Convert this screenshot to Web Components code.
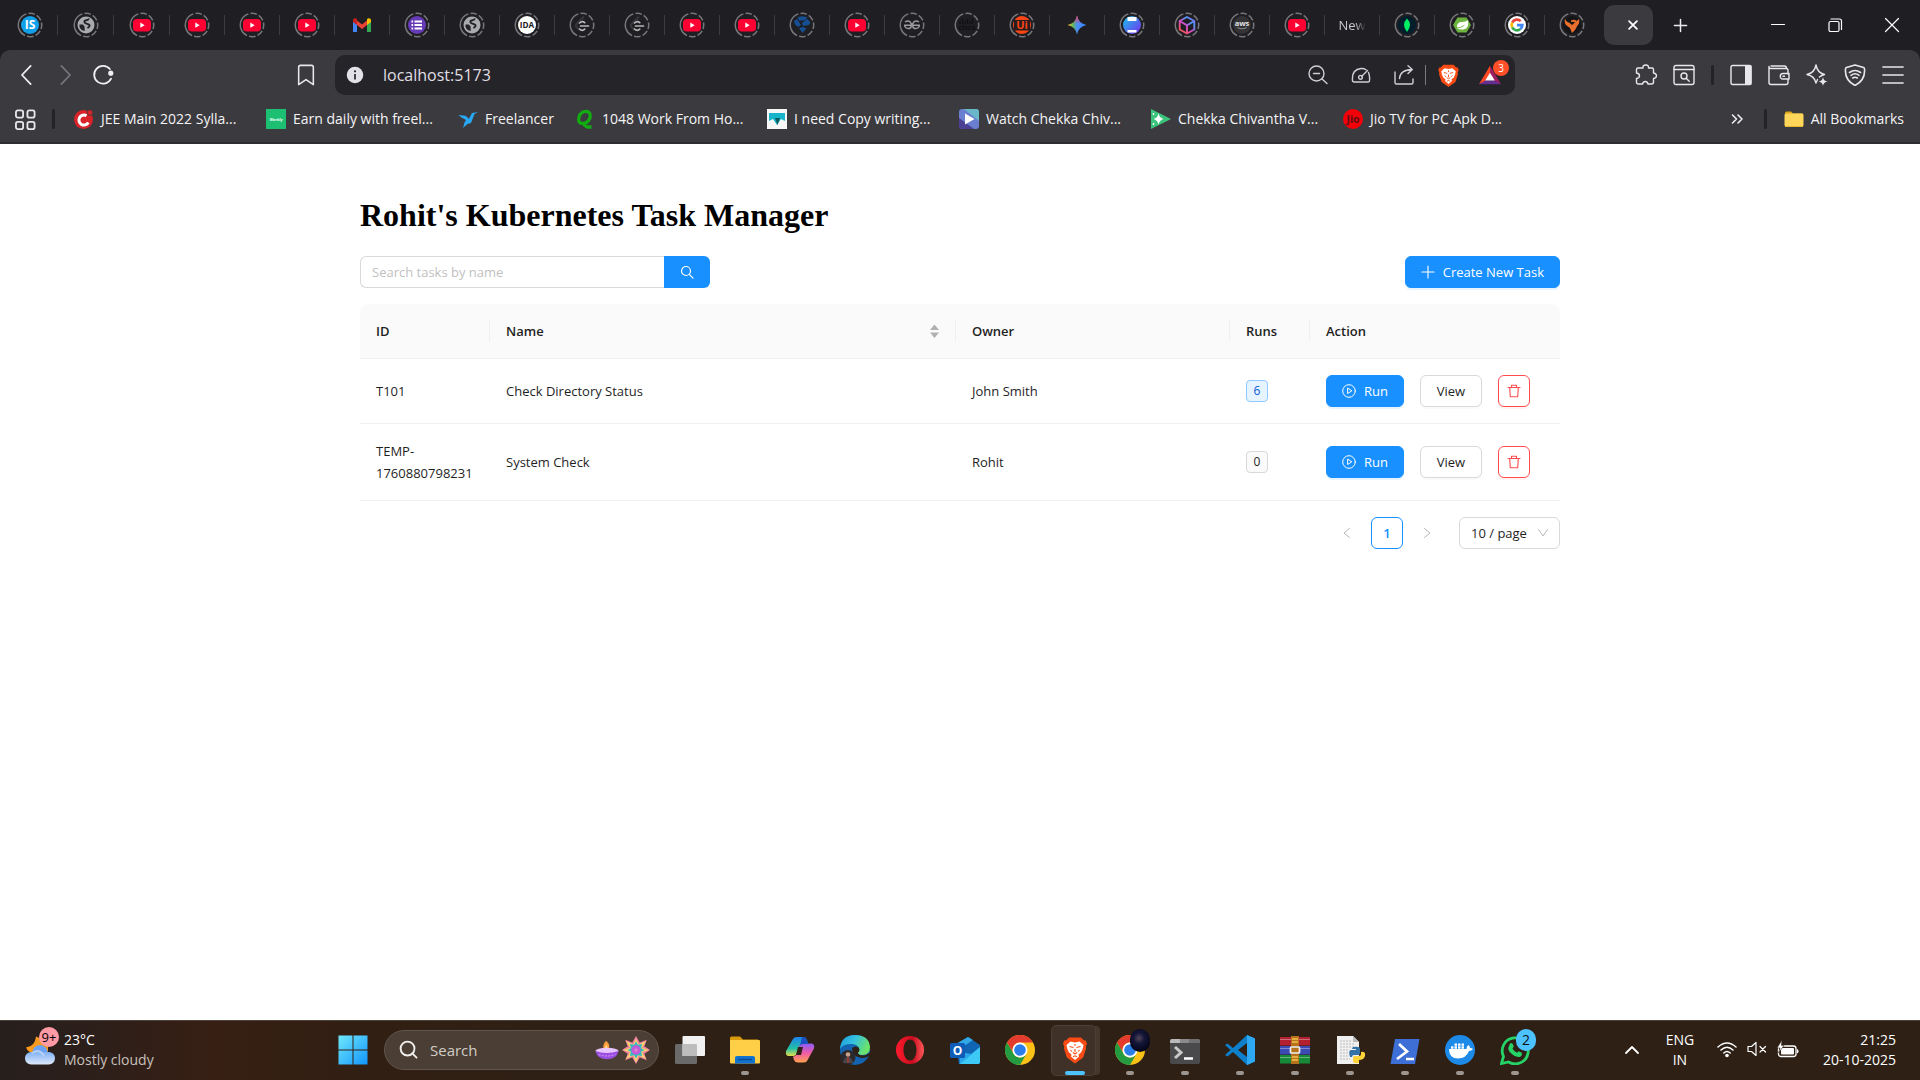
<!DOCTYPE html>
<html lang="en">
<head>
<meta charset="utf-8">
<title>Rohit's Kubernetes Task Manager</title>
<style>
  html, body { margin: 0; height: 100%; }
  body { font-family: "Open Sans", "Noto Sans", sans-serif; font-size: 14px; background: #fff; }
</style>
</head>
<body>
<desk-top></desk-top>
<script>
const RING = '<circle cx="13" cy="13" r="11.7" fill="none" stroke="#77777b" stroke-width="1.5" pathLength="100" stroke-dasharray="38 3 8.8 3 8.8 3 8.8 3 8.8 3 8.8 3" transform="rotate(115 13 13)"/>';
const fav = inner => ['0 0 26 26', RING + inner];
const line = (inner, c = '#e8e8ec', w = 1.4) => `<g fill="none" stroke="${c}" stroke-width="${w}" stroke-linecap="round" stroke-linejoin="round">${inner}</g>`;
const T = (x, y, size, fill, text, extra = '') => `<text x="${x}" y="${y}" font-size="${size}" fill="${fill}" text-anchor="middle" font-family="Open Sans, sans-serif" font-weight="700" ${extra}>${text}</text>`;
const LION = '<path fill="#fb4b14" d="M6 1h12l3 3 1.5-.3L24 7l-1.200 3 .3 2-3 9-8.100 6-8.100-6-3-9 .3-2L0 7l1.500-3.300L3 4z"/><path fill="#fff" d="M7.500 5l4.500 1 4.500-1L20.500 8.500l-.8 4-1.700 3.500-2.500 2 .5 2-4 3.500L8 20l.5-2L6 16l-1.700-3.500-.8-4z"/><path d="M6.500 10l4 1M17.500 10l-4 1M12 7.500v2M12 12.500v3M9.800 16L12 17.300l2.200-1.300M7.500 13.500l1.300 1.500M16.500 13.500l-1.300 1.500M10 20.300l2-1 2 1" stroke="#fb4b14" stroke-width="1.100" fill="none"/>';
const CHROME = '<circle cx="15" cy="15" r="15" fill="#fbc116"/><path fill="#e33b2e" d="M2 7.500A15 15 0 0 1 28 7.500H15a7.500 7.500 0 0 0-6.500 11.200z"/><path fill="#249a41" d="M2 7.500A15 15 0 0 0 15 30l6.500-11.300a7.500 7.500 0 0 1-13 0z"/><circle cx="15" cy="15" r="7.500" fill="#fff"/><circle cx="15" cy="15" r="5.800" fill="#2b7de9"/>';
const LEET = '<path d="M15 4.500L7.500 12q-1.500 1.500 0 3l3 3" stroke="#37363a" stroke-width="2.200" fill="none"/><path d="M10.500 11q2.700-2.500 5.200-.4M10.500 17q2.700 2.500 5.200.2M11.500 14H19.500" stroke="#b9b9b9" stroke-width="1.700" fill="none" stroke-linecap="round"/>';
const GLOBE = '<circle cx="13" cy="13" r="8.500" fill="#a9abaf"/><path d="M6.500 12.500h3.300l1.700 2 .3 4.500q-4-.5-5.300-4z" fill="#242327"/><path d="M16 6.500c-1 2.500-5 1-4.600 3.600.4 2.400 5.200 1.200 5.200 3.600 0 1.200-1 1.600-2.200 2.300" fill="none" stroke="#242327" stroke-width="1.900"/>';

const ICONS = {
  is: fav('<circle cx="13" cy="13" r="9" fill="#12a0e8"/>' + T(13, 17.400, 12, '#fff', 'IS')),
  globe: fav(GLOBE),
  youtube: fav('<rect x="4" y="7" width="18" height="12.500" rx="3.800" fill="#ff0033"/><path d="M11.300 10.600v5.200l4.400-2.600z" fill="#fff"/>'),
  gmail: ['0 0 26 26', '<path d="M4 8v12h4V12z" fill="#4285f4"/><path d="M22 8v12h-4V12z" fill="#34a853"/><path d="M8 8.500l5 4 5-4V13l-5 4-5-4z" fill="#ea4335"/><path d="M4 8.500C4 6 6.500 5.700 8 7v6l-4-3z" fill="#c5221f"/><path d="M22 8.500c0-2.500-2.500-2.800-4-1.500v6l4-3z" fill="#fbbc04"/>'],
  forms: fav('<circle cx="13" cy="13" r="9" fill="#673ab7"/><path d="M10.500 9.500H18M10.500 13H18M10.500 16.500H18M7.500 9.500h1.600M7.500 13h1.600M7.500 16.500h1.600" stroke="#fff" stroke-width="1.900"/>'),
  ida: fav('<circle cx="13" cy="13" r="9" fill="#fff"/>' + T(13, 16.100, 8.200, '#222', 'IDA')),
  leet: fav(LEET),
  blocks: fav('<g fill="#164f94"><path d="M8.500 5l5-.8 5 1-2.500 3-6 .5z"/><path d="M5 9l3-2 2 3 2 3-3 2-3-2.500z"/><path d="M13 11l5-4 3.500 3-1.500 3-6 1z"/><path d="M10 16l4-1 3.500 1.500-4 4.500z"/></g>'),
  gfg: fav('<g fill="none" stroke="#9a9a9d" stroke-width="1.500"><path d="M5 13.200h16M6 10q3-2 5.200 0c2 2 1.500 6.500-1.500 6.500-4 0-4-3.300-4-3.300M20 10q-3-2-5.200 0c-2 2-1.500 6.500 1.500 6.500 4 0 4-3.300 4-3.300"/></g>'),
  cisco: fav('<path d="M6 9v3M8.500 7v5M11 9v3M13.500 7v5M16 9v3M18.500 7v5" stroke="#101013" stroke-width="1.200"/>' + T(13, 18.200, 7, '#101013', 'cisco')),
  uipath: fav('<circle cx="13" cy="13" r="9" fill="#fa4616"/><rect x="5" y="8" width="16" height="10.500" fill="#2a1c1c"/>' + T(13, 17.300, 11, '#fa4616', 'Ui')),
  gemini: ['0 0 26 26', '<defs><linearGradient id="g" x1="0" y1=".5" x2="1" y2=".5"><stop offset=".05" stop-color="#f6c02a"/><stop offset=".3" stop-color="#5cb85c"/><stop offset=".5" stop-color="#4b8df8"/><stop offset="1" stop-color="#3a86ff"/></linearGradient><linearGradient id="r" x1="0" y1="0" x2="0" y2="1"><stop offset="0" stop-color="#ff3b4e"/><stop offset=".45" stop-color="#ff3b4e" stop-opacity="0"/></linearGradient></defs><path d="M13 3.500q1.500 8 9.500 9.500-8 1.500-9.500 9.500-1.500-8-9.500-9.500 8-1.500 9.500-9.500z" fill="url(#g)"/><path d="M13 3.500q1.500 8 9.500 9.500-8 1.500-9.500 9.500-1.500-8-9.500-9.500 8-1.500 9.500-9.500z" fill="url(#r)"/>'],
  render: fav('<defs><linearGradient id="g" x1="0" y1="0" x2="1" y2="1"><stop offset="0" stop-color="#14c5ea"/><stop offset="1" stop-color="#7a2bf0"/></linearGradient></defs><circle cx="13" cy="13" r="9" fill="url(#g)"/><rect x="8.500" y="5" width="9" height="4" fill="#fff"/><rect x="8.500" y="18" width="9" height="2.500" fill="#fff"/>'),
  cube: fav('<defs><linearGradient id="g" x1="1" y1="0" x2=".2" y2="1"><stop offset="0" stop-color="#9a5cf0"/><stop offset=".3" stop-color="#4a9bf5"/><stop offset=".6" stop-color="#d04cc8"/><stop offset="1" stop-color="#ff5a4a"/></linearGradient></defs><path d="M13 5l7.300 4v8.500L13 21.500l-7.300-4V9zM5.700 9l7.300 4.300L20.300 9M13 13.300v8" fill="none" stroke="url(#g)" stroke-width="1.900"/>'),
  aws: fav('<circle cx="13" cy="13" r="9" fill="#333336"/>' + T(13, 13.800, 7.500, '#e4e4e6', 'aws') + '<path d="M8.500 15.500q4.500 2.600 9 0" fill="none" stroke="#8a8a8d" stroke-width="1.100"/>'),
  mongo: fav('<circle cx="13" cy="13" r="9" fill="#001e2b"/><path d="M13 6.500q6 6 0 13.500-6-7.500 0-13.500z" fill="#00ed64"/>'),
  spring: fav('<path d="M8.500 5.500h9L22 13l-4.500 7.500h-9L4 13z" fill="#6db33f"/><path d="M19 8q1.500 9-5 9.500-4 .3-6-1 6-.5 8-4-4 3-8 3Q7.500 10 13 10q4 0 6-2z" fill="#fff"/>'),
  google: fav('<circle cx="13" cy="13" r="9" fill="#fff"/><g fill="none" stroke-width="2.700"><path d="M8.200 10.600a5.300 5.300 0 0 1 8.500-1.500" stroke="#ea4335"/><path d="M8.200 15.400a5.300 5.300 0 0 1 0-4.800" stroke="#fbbc05"/><path d="M16.400 17a5.300 5.300 0 0 1-8.200-1.600" stroke="#34a853"/><path d="M13 13.200h5.300a5 5 0 0 1-1.900 3.800" stroke="#4285f4"/></g>'),
  fox: fav('<circle cx="13" cy="13" r="9" fill="#151417"/><path d="M6 6.500q1 3.500 4 4l3 2.500 3-2.500 4-3.500q1 4-1.500 6.500L16 18l-3 3-2-5-3.500-2.500q-2.500-2-1.500-7z" fill="#ea6f2c"/><path d="M12 8.500q3-1.500 6 .5l-2 1.500q-2-1-4-.5z" fill="#ea6f2c"/>'),

  plus: ['0 0 16 16', line('<path d="M8 1.500v13M1.500 8h13"/>', '#ececf0', 1.600)],
  x: ['0 0 16 16', line('<path d="M3.500 3.500l9 9M12.500 3.500l-9 9"/>', '#fff', 2)],
  min: ['0 0 16 16', line('<path d="M1.500 7.500h13"/>', '#fff', 1.200)],
  restore: ['0 0 16 16', line('<rect x="2" y="4.500" width="10" height="10" rx="1.500"/><path d="M4 2h8.500Q14.500 2 14.500 4v8.500"/>', '#fff', 1.200)],
  close: ['0 0 16 16', line('<path d="M1.500 1.500l13 13M14.500 1.500l-13 13"/>', '#fff', 1.200)],
  back: ['0 0 24 24', line('<path d="M16 2l-9.500 10L16 22"/>', '#f0f0f4', 1.900)],
  forward: ['0 0 24 24', line('<path d="M8 2l9.500 10L8 22"/>', '#77767c', 1.900)],
  reload: ['0 0 24 24', line('<path d="M19.500 5.500A9.700 9.700 0 1 0 20.800 16"/>', '#f0f0f4', 1.900) + '<circle cx="20.500" cy="10" r="2.800" fill="#f0f0f4"/>'],
  bookmark: ['0 0 24 24', line('<path d="M4 3.500Q4 1.500 6 1.500h12Q20 1.500 20 3.500V22.500l-8-5.500-8 5.500z"/>', '#e8e8ec', 1.700)],
  info: ['0 0 24 24', '<circle cx="12" cy="12" r="11" fill="#e3e2e8"/><circle cx="12" cy="7" r="1.500" fill="#29282c"/><path d="M12 10.500V18" stroke="#29282c" stroke-width="2.300"/>'],
  zoomout: ['0 0 20 20', line('<circle cx="8.500" cy="8.500" r="7.500"/><path d="M14 14l5 4.500M5.500 8.500h6"/>', '#cfced4')],
  gauge: ['0 0 20 20', line('<path d="M1.500 15.500q-1-11 8.500-12 3-.2 5 1.200M17.500 7.500q1.500 3.500 1 8 0 1.500-1.500 1.500H3q-1.500 0-1.500-1.500M10.500 11.500l6-6"/><circle cx="9.500" cy="12.300" r="1.900"/>', '#cfced4')],
  share: ['0 0 20 20', line('<path d="M1 7v10.500Q1 19 2.500 19h15q1.500 0 1.500-1.500V14M5.500 13.500Q6 5 18 4.500M14 .8l4.300 3.700L14 8.500"/>', '#cfced4')],
  lion: ['0 0 24 27', LION],
  bat: ['0 0 24 22', '<path d="M12 1L0 21l7-3 5-9z" fill="#ff4724"/><path d="M12 1l12 20-7-3-5-9z" fill="#9e1f63"/><path d="M0 21h24l-7-4H7z" fill="#662d91"/><path d="M12 8.500L6.800 17h10.400z" fill="#fff"/>'],
  puzzle: ['0 0 22 22', line('<path d="M8 4q-.5-3 2.700-3T13.500 4H17q1.500 0 1.500 1.500V9q3 .3 3 2.800T18.500 14.500V18q0 2-2 2h-3.500q-.5-2.500-2.700-2.500T7.500 20H3.500q-2 0-2-2v-3.500q3-.3 3-2.700T1.500 9V5.500Q1.500 4 3 4z"/>')],
  searchwin: ['0 0 22 22', line('<rect x="1" y="1.500" width="20" height="19" rx="2"/><path d="M1 5.500h20"/><circle cx="11" cy="12" r="3"/><path d="M13.200 14.200l3 3"/>')],
  sidebar: ['0 0 22 22', line('<rect x="1" y="1.500" width="20" height="19" rx="1.500"/>') + '<rect x="15" y="1.500" width="6.500" height="19" fill="#e8e8ec"/>'],
  wallet: ['0 0 22 22', line('<path d="M20 10V6.500q0-2-2-2H3q-2 0-2-2M1 2.500v16q0 2 2 2h15q2 0 2-2V15M3 2h13.500q2 0 2 2.500M21 9.500h-6q-2.700 0-2.700 2.800T15 15h6z"/><path d="M15 12.300h1.500"/>')],
  sparkle: ['0 0 22 22', line('<path d="M10 1q1.500 8 8.500 9.500-3 .8-5 2.500M10 1Q8.500 9 1 10.500 8.500 12 10 19q.8-2 1.500-3.500"/>') + '<path d="M17 13q.5 4 4.500 4.500-4 .5-4.500 4.500-.5-4-4.500-4.500 4-.5 4.500-4.500z" fill="#e8e8ec"/>'],
  vpn: ['0 0 22 22', line('<path d="M11 1l8.500 2.500q1 .3 1 1.500 1 11-9.500 16.500Q.5 16 1.500 5q0-1.200 1-1.500zM5.500 8.500q5.500-4 11 0M7 11.300q4-3 8 0M8.800 14q2.200-1.600 4.400 0"/>', '#e8e8ec', 1.600)],
  menu: ['0 0 22 22', line('<path d="M1 3h20M1 11h20M1 19h20"/>', '#e8e8ec', 1.700)],
  apps: ['0 0 22 22', line('<rect x="1" y="1.500" width="7.500" height="7.500" rx="2"/><rect x="13" y="1.500" width="7.500" height="7.500" rx="2"/><rect x="1" y="13.500" width="7.500" height="7.500" rx="2"/><rect x="13" y="13.500" width="7.500" height="7.500" rx="2"/>', '#e8e8ec', 1.900)],
  more: ['0 0 16 16', line('<path d="M3.500 4L7.500 8l-4 4M9 4l4 4-4 4"/>', '#f0f0f4', 1.600)],
  folder: ['0 0 20 20', '<path d="M1 4q0-1.500 1.500-1.500H7L9 4.500h9.500V9H1z" fill="#e0a51c"/><rect x=".500" y="4.500" width="19" height="13" rx="1.500" fill="#ffd65a"/><path d="M1 17.500h18" stroke="#e9b632"/>'],

  bcareers: ['0 0 20 20', '<circle cx="9.500" cy="10.500" r="9.500" fill="#d8232a"/><path d="M12.500 6.800a5 5 0 1 0 1.800 6.700" fill="none" stroke="#fff" stroke-width="3"/><circle cx="16" cy="3.500" r="2.800" fill="#d8232a" stroke="#3b3a3e" stroke-width=".800"/>'],
  bworkly: ['0 0 20 20', '<rect width="20" height="20" fill="#1dbf73"/>' + T(10, 11.500, 4, '#eafff4', 'Workly', 'font-style="italic"')],
  bfreelancer: ['0 0 20 20', '<path d="M.500 6l7 .8 3.500 3L14 4l6-1-3.500 2L13 14l-3.500 1L5 19l1.500-5.500L8 11 3.500 8.500z" fill="#29a8f5"/>'],
  bq: ['0 0 20 20', '<path d="M12 2.500Q6 2 4 8q-1.500 6.500 3.500 6.500T15 9q1-6-3-6.500M8.500 14q1.500 4 4.500 4h3.500" fill="none" stroke="#12ab12" stroke-width="3.300"/>'],
  bcopy: ['0 0 20 20', '<rect width="20" height="20" fill="#f7f7f7"/><path d="M2 4h16v8l-4-2-4 6-4-6-4 2z" fill="#18b4c9"/><path d="M8 9h5l-2.500 7z" fill="#0d5c63"/>'],
  bwatch: ['0 0 20 20', '<rect width="20" height="20" rx="3" fill="#6a7fd0"/><path d="M5 0h12q3 0 3 3v9z" fill="#69b7c8"/><path d="M0 9l15 11H3q-3 0-3-3z" fill="#4c3f94"/><path d="M6 4.500v11l9.500-5.500z" fill="#fff"/>'],
  bchekka: ['0 0 20 20', '<path d="M0 0l20 10L0 20z" fill="#3cc47c"/><path d="M7.500 4.500Q8.500 9 12.500 10q-4 1-5 5.500Q6.500 11 2.500 10q4-1 5-5.500z" fill="#fff"/><circle cx="2.500" cy="5" r=".900" fill="#fff"/><circle cx="2.500" cy="15" r=".900" fill="#fff"/>'],
  bjio: ['0 0 20 20', '<circle cx="10" cy="10" r="10" fill="#f40009"/>' + T(10, 14, 10.500, '#5a0d14', 'Jio')],

  asearch: ['0 0 14 14', line('<circle cx="6" cy="6" r="4.500"/><path d="M9.300 9.300l3.700 3.900"/>', 'currentColor', 1.200)],
  aplus: ['0 0 14 14', line('<path d="M7 1v12M1 7h12"/>', 'currentColor', 1.100)],
  aplay: ['0 0 14 14', line('<circle cx="7" cy="7" r="6.300"/><path d="M5.600 4.500v5L9.500 7z"/>', 'currentColor', 1)],
  atrash: ['0 0 14 14', line('<path d="M1 3.500h12M4.500 3.500V1.300h5v2.200M2.700 3.500l.6 9.200h7.400l.6-9.200"/>', 'currentColor', 1.100)],
  aleft: ['0 0 12 12', line('<path d="M8.500 1.500L3 6l5.500 4.500"/>', '#b8b8b8', 1)],
  aright: ['0 0 12 12', line('<path d="M3.500 1.500L9 6l-5.500 4.500"/>', '#b8b8b8', 1)],
  adown: ['0 0 12 12', line('<path d="M1.500 2.500L6 9l4.500-6.500"/>', '#b8b8b8', 1)],
  sort: ['-5 0 16 16', '<path d="M5.500 1.500L10 7H1zM5.500 15L10 9.500H1z" fill="#b0b0b0"/>'],

  weather: ['0 0 30 30', '<defs><linearGradient id="g" x1="0" y1="0" x2="0" y2="1"><stop offset="0" stop-color="#7fb1f7"/><stop offset="1" stop-color="#dfe9f8"/></linearGradient></defs><path d="M11 1.500q-1 10-10 11 2 5 8 6l14-2V7z" fill="#f79a1e"/><circle cx="15" cy="17.500" r="7.500" fill="#6da2f2"/><rect x="0" y="17" width="30" height="12.500" rx="6.200" fill="url(#g)"/><path d="M7 18q8-5 12 3" fill="none" stroke="#b6cff6" stroke-width="2"/>'],
  windows: ['0 0 30 30', '<defs><linearGradient id="g" x1="0" y1="0" x2="30" y2="30" gradientUnits="userSpaceOnUse"><stop offset="0" stop-color="#72eafc"/><stop offset="1" stop-color="#0f93fb"/></linearGradient></defs><path d="M.500.500h14v14H.500zM15.500.500h14v14h-14zM.500 15.500h14v14H.500zM15.500 15.500h14v14h-14z" fill="url(#g)"/>'],
  wsearch: ['0 0 20 20', line('<circle cx="9" cy="9" r="7.300"/><path d="M14 14l4.500 4.500"/>', '#f0eeec', 2)],
  diya: ['0 0 26 22', '<path d="M12 1q6 5 2 10h-4q-3-5 2-10z" fill="#ff9d3c"/><path d="M12.500 5q2 3 0 6h-2q-.500-3 2-6z" fill="#ffe08a"/><ellipse cx="13" cy="12" rx="12.500" ry="3.500" fill="#e9c5ff"/><path d="M.500 12q12 4.500 25 0-2 9-12.500 9T.500 12z" fill="#9a4fe0"/><path d="M4 16q9 3 18 0" stroke="#d9a3ff" fill="none" stroke-dasharray="2 1.500"/>'],
  rangoli: ['0 0 30 30', '<path d="M15 0l4 7 7.500-3-2.500 7 6 4-6 4 2.500 7-7.500-3-4 7-4-7-7.500 3L6 19l-6-4 6-4-2.500-7L11 7z" fill="#ef7f9c"/><path d="M15 3l3 6 8-4-4.500 7.500L29 15l-7.500 2.500L26 25l-8-4-3 8-3-8-8 4 4.500-7.500L1 15l7.500-2.500L4 5l8 4z" fill="#f8d271"/><path d="M15 6l2 3.500 4.500-1-1 4.500L24 15l-3.500 2 1 4.500-4.500-1L15 24l-2-3.500-4.500 1 1-4.500L6 15l3.500-2-1-4.500 4.500 1z" fill="#31b9c2"/><circle cx="15" cy="15" r="5" fill="#c35ad8"/><circle cx="15" cy="15" r="2" fill="#e07fd0"/>'],
  taskview: ['0 0 30 30', '<rect x="0" y="9" width="22" height="20" rx="1.500" fill="#6a6a6a"/><rect x="7.500" y="1" width="22.500" height="20" rx="1" fill="#f1f1f1"/><path d="M7.500 9H21q1 0 1 1v11H7.500z" fill="#bdbdbd"/>'],
  explorer: ['0 0 30 30', '<path d="M0 3q0-1.500 1.500-1.500H10l3 3H28V14H0z" fill="#d99b0b"/><rect x="0" y="5" width="30" height="23.500" rx="1" fill="#ffcf48"/><path d="M5 28.500V23q0-2 2-2h16q2 0 2 2v5.500z" fill="#1273cf"/><path d="M8 24.500h14" stroke="#0a4d94" stroke-width="1.500"/>'],
  copilot: ['0 0 30 30', '<defs><linearGradient id="a" x1="0" y1="0" x2="0" y2="1"><stop offset="0" stop-color="#1c84f0"/><stop offset=".6" stop-color="#22bfa5"/><stop offset="1" stop-color="#e6e04a"/></linearGradient><linearGradient id="b" x1="0" y1="0" x2="0" y2="1"><stop offset="0" stop-color="#8b5cf6"/><stop offset=".5" stop-color="#ef5aa8"/><stop offset="1" stop-color="#ffa24d"/></linearGradient></defs><path d="M8 4q1-2 4-2h6q3 0 4 3l1 4h-5q-3 0-4 3l-2 6q-1 3-4 3H4q-4 0-3-5z" fill="url(#a)"/><path d="M22 26q-1 1.500-4 1.500h-5q-3 0-4-2.500l-1-3.500q3 0 4-3l2-7q1-3 4-3h8q4 0 3 5z" fill="url(#b)"/><path d="M13 12h5l-2 8h-5z" fill="#2e2015"/><path d="M17 2h1q3 0 4 3l1 4h-5q-2 0-3 2z" fill="#1c4fbf"/>'],
  edge: ['0 0 30 30', '<defs><linearGradient id="g" x1="0" y1="0" x2="1" y2=".4"><stop offset="0" stop-color="#1a98dc"/><stop offset=".5" stop-color="#35c1df"/><stop offset="1" stop-color="#6be36a"/></linearGradient></defs><circle cx="15" cy="15" r="15" fill="#1363b0"/><path d="M0 14Q1 0 15 0t15 12q0 8-8 8-5 0-4-3 2-1 1-4-2-4-8-4-8 0-11 5z" fill="url(#g)"/><path d="M12 13q4-3 7 0 1 3-1 4.500 0 3 5 3 4 0 6.500-3l.5 2.500Q27 23 22 23 12 22 12 13z" fill="#2e2015"/><circle cx="8" cy="22.500" r="7.500" fill="#2c292c"/><circle cx="8" cy="19.500" r="2.300" fill="#c9a18a"/><path d="M3 28q1-6 5-6t5 6z" fill="#4c4548"/><path d="M8 22v6" stroke="#a33a32" stroke-width="1.500"/>'],
  opera: ['0 0 30 30', '<defs><linearGradient id="g" x1="0" y1="0" x2="1" y2="0"><stop offset="0" stop-color="#ff1b2d"/><stop offset=".6" stop-color="#c60c1e"/><stop offset="1" stop-color="#ff5a5a"/></linearGradient></defs><path fill-rule="evenodd" d="M15 1a14 14 0 1 0 0 28 14 14 0 1 0 0-28zm0 3.500c4 0 6.500 5 6.500 10.500S19 25.500 15 25.500 8.500 20.500 8.500 15 11 4.500 15 4.500z" fill="url(#g)"/>'],
  outlook: ['0 0 30 30', '<path d="M6 9L18 2l12 8v17q0 2-2 2H9z" fill="#1066b5"/><path d="M6 9L18 2l5 3L8 15z" fill="#32a9e7"/><path d="M30 12v15q0 2-2 2H9z" fill="#3ccaf4"/><path d="M9 17l13 2-12 10z" fill="#2aa6ea"/><rect x="0" y="8" width="15" height="15" rx="1.500" fill="#0f5cb8"/>' + T(7.500, 20, 12, '#fff', 'O')],
  chrome: ['0 0 30 30', CHROME],
  brave: ['0 -1.500 24 30', LION],
  chrome2: ['0 0 30 30', CHROME],
  terminal: ['0 0 30 30', '<rect x="0" y="4" width="30" height="25" rx="2" fill="#4a4a4c"/><path d="M0 8V6q0-2 2-2h8v4z" fill="#b9b9b9"/><path d="M10 4h9v4h-9z" fill="#8a8a8c"/><path d="M19 4h9q2 0 2 2v2H19z" fill="#707072"/><path d="M5 12l6 5.500L5 23" fill="none" stroke="#c9c9c9" stroke-width="3"/><path d="M14 23.500h9" stroke="#fff" stroke-width="2.500"/>'],
  vscode: ['0 0 30 30', '<path d="M22 0l8 3.500v23L22 30 8 17l-5.500 4.500L0 20l5.500-5L0 10l2.500-1.500L8 13z" fill="#0d7fcb"/><path d="M22 0l8 3.500v23L22 30z" fill="#2ea8f0"/><path d="M22 8v14l-9-7z" fill="#2e2015"/>'],
  winrar: ['0 0 30 30', '<rect y="2" width="30" height="8.500" fill="#b3202f"/><rect y="11" width="30" height="8.500" fill="#3c4ab4"/><rect y="20" width="30" height="8.500" fill="#178a3a"/><path d="M0 4.500h30M0 13.500h30M0 22.500h30" stroke="#fff" stroke-opacity=".35"/><rect x="11" y="1" width="8" height="28" fill="#b5741c"/><path d="M12 4h6M12 7h6M12 22h6M12 25h6" stroke="#f3c14d" stroke-width="1.500"/><rect x="10.500" y="12" width="9" height="6" rx="1" fill="none" stroke="#eee" stroke-width="1.700"/>'],
  python: ['0 0 30 30', '<path d="M2 1h16l6 6v22H2z" fill="#efefef"/><path d="M18 1l6 6h-6z" fill="#bbb"/><path d="M5 6h11M5 9h14M5 12h14M5 15h9M5 18h8M5 21h8M5 24h10" stroke="#bdbdbd" stroke-dasharray="2 1"/><path d="M18 12q7-1 7 2v4q0 2-2 2h-4q-2 0-2 2h-2q-2-7 1-7h5v-1h-4z" fill="#3572a5"/><path d="M24 28q-6 1-6-2v-3q0-2 2-2h4q2 0 2-2v-2q5-1 4 4-1 4-6 4z" fill="#ffd43b"/>'],
  powershell: ['0 0 30 30', '<path d="M5 4h24.500L25 29H.500z" fill="#3d6fd6"/><path d="M9 9l8 7.500L7 24M16 24h8" fill="none" stroke="#fff" stroke-width="2.700"/>'],
  docker: ['0 0 30 30', '<circle cx="15" cy="15" r="15" fill="#1d8ae8"/><path d="M4 14h17.500q0-3 2-4 1.500 1 1.500 3 2 0 3 1-1.500 2-4 2-3 7.500-11 7.500Q4 23.500 4 14z" fill="#fff"/><path d="M6 12.500h2.500M9.500 12.500H12M13 12.500h2.500M16.500 12.500H19M9.500 9.700H12M13 9.700h2.500M16.500 9.700H19" stroke="#fff" stroke-width="2.300"/>'],
  whatsapp: ['0 0 30 30', '<path d="M1.500 28.500l2-7A13 13 0 1 1 8.500 27z" fill="none" stroke="#25d366" stroke-width="2.800"/><path d="M10 8.500q2-1.500 3 1l.8 2-1.300 2q1.500 3 4.500 4.300l1.700-1.600 3 1.500q1 3-2 4.200-4 1-8.500-3.400T9 11z" fill="#25d366"/>'],
  chevup: ['0 0 16 16', line('<path d="M2 11l6-6 6 6"/>', '#fff', 1.800)],
  wifi: ['0 0 20 20', line('<path d="M1 8q9-8 18 0M4 11q6-5.500 12 0M6.800 14q3.200-3 6.400 0"/>', '#fff', 1.500) + '<circle cx="10" cy="16.500" r="1.800" fill="#fff"/>'],
  mute: ['0 0 20 20', line('<path d="M1 7.500h3.500L9 3.500v13l-4.500-4H1zM13 7.500l5.500 5.500M18.500 7.500L13 13"/>', '#fff', 1.200)],
  battery: ['0 0 22 20', line('<rect x="1.500" y="6" width="17.500" height="10.500" rx="2.500"/>', '#fff', 1.300) + '<rect x="4" y="8" width="13" height="6.500" rx="1" fill="#fff"/><path d="M20 9v4.500q1.500-.5 1.500-2.200T20 9z" fill="#fff"/><path d="M5 0L0 8h3l-1.500 5L7 5.500H4.500z" fill="#fff" stroke="#2e2015" stroke-width=".600"/>'],
};

const define = (name, html, setup) => {
  const template = document.createElement('template');
  template.innerHTML = html;
  customElements.define(name, class extends HTMLElement {
    constructor() {
      super();
      this.attachShadow({ mode: 'open' }).append(template.content.cloneNode(true));
    }
    connectedCallback() { if (setup) setup(this, this.shadowRoot); }
  });
};

/* <ui-icon name size>: one inline drawing */
define('ui-icon', '<style>:host{display:block;flex:none}svg{display:block}</style>', (host, root) => {
  if (root.querySelector('svg')) return;
  const [box, markup] = ICONS[host.getAttribute('name')];
  const size = host.getAttribute('size') || 20;
  root.innerHTML += `<svg width="${size}" height="${size}" viewBox="${box}" aria-hidden="true">${markup}</svg>`;
});

/* <icon-button icon label size>: borderless button, width from --w, height from --h */
define('icon-button', `<style>
  :host{display:block;flex:none;position:relative}
  button{all:unset;display:flex;align-items:center;justify-content:center;width:var(--w,38px);height:var(--h,40px)}
</style><button type="button"></button><slot></slot>`, (host, root) => {
  const b = root.querySelector('button');
  b.setAttribute('aria-label', host.getAttribute('label') || '');
  b.innerHTML = `<ui-icon name="${host.getAttribute('icon')}" size="${host.getAttribute('size') || 20}"></ui-icon>`;
});

/* ---------- browser ---------- */
const TABS = ['is','globe','youtube','youtube','youtube','youtube','gmail','forms','globe','ida','leet','leet','youtube','youtube','blocks','youtube','gfg','cisco','uipath','gemini','render','cube','aws','youtube','','mongo','spring','google','fox'];
define('tab-strip', `<style>
  :host{display:flex;height:50px;align-items:center;background:#1f1e22;padding-left:2px}
  .tab{all:unset;box-sizing:border-box;flex:0 1 55px;min-width:0;height:20px;display:flex;align-items:center;justify-content:center;border-right:1px solid #3d3c41}
  .tab:nth-of-type(-n+3){flex-basis:56px}
  .tab.last{border-color:transparent}
  .tab span{white-space:nowrap;font-size:13px;line-height:20px;color:#c9c8ce;-webkit-mask-image:linear-gradient(90deg,#000 60%,transparent)}
  .active{flex:none;width:49px;height:40px;margin-left:4px;border-radius:10px;background:#3b3a3e;display:flex;justify-content:flex-end}
  .active icon-button{--w:40px}
  .new{--w:54px}
  .win{margin-left:auto;display:flex;--w:57px;--h:50px}
</style>${TABS.map((t, i) => `<button class="tab${i === TABS.length - 1 ? ' last' : ''}" type="button">${t ? `<ui-icon name="${t}" size="26"></ui-icon>` : '<span>New</span>'}</button>`).join('')}
<div class="active"><icon-button icon="x" label="Close tab" size="14"></icon-button></div>
<icon-button class="new" icon="plus" label="New tab" size="15"></icon-button>
<div class="win"><icon-button icon="min" label="Minimise" size="16"></icon-button><icon-button icon="restore" label="Restore" size="16"></icon-button><icon-button icon="close" label="Close" size="16"></icon-button></div>`);

define('nav-bar', `<style>
  :host{display:flex;align-items:center;height:50px;color:#e8e8ec}
  .left{flex:0 0 317px;display:flex;padding-left:8px;margin-right:10px}
  .left .mark{margin-left:auto}
  .url{flex:1;display:flex;align-items:center;height:40px;border-radius:10px;background:#252429;padding:0 4px 0 11px}
  .url icon-button{--w:43px}
  .url .brand{--w:42px}
  input{all:unset;flex:1;min-width:0;margin-left:19px;font-size:16px;line-height:24px;color:#e0dfe4}
  .sep{width:1px;height:20px;margin:0 1px 0 0;background:#7b7a80}
  .badge{position:absolute;left:24px;top:5px;width:16px;height:16px;border-radius:8px;background:#ff5029;color:#fff;font-size:10px;line-height:16px;text-align:center}
  .right{flex:0 0 397px;display:flex;justify-content:flex-end;align-items:center;padding-right:8px}
  .bar{width:3px;height:20px;margin:0 8px;border-radius:2px;background:#232226}
</style>
<div class="left"><icon-button icon="back" label="Back" size="22"></icon-button><icon-button icon="forward" label="Forward" size="22"></icon-button><icon-button icon="reload" label="Reload" size="22"></icon-button><icon-button class="mark" icon="bookmark" label="Bookmark this page" size="22"></icon-button></div>
<div class="url"><ui-icon name="info" size="18"></ui-icon><input aria-label="Address" value="localhost:5173">
<icon-button icon="zoomout" label="Zoom"></icon-button><icon-button icon="gauge" label="Performance"></icon-button><icon-button icon="share" label="Share"></icon-button><div class="sep"></div>
<icon-button class="brand" icon="lion" label="Shields" size="23"></icon-button><icon-button class="brand" icon="bat" label="Rewards" size="22"><span class="badge">3</span></icon-button></div>
<div class="right"><icon-button icon="puzzle" label="Extensions" size="22"></icon-button><icon-button icon="searchwin" label="Search tabs" size="22"></icon-button><div class="bar"></div><icon-button icon="sidebar" label="Sidebar" size="22"></icon-button><icon-button icon="wallet" label="Wallet" size="22"></icon-button><icon-button icon="sparkle" label="Assistant" size="22"></icon-button><icon-button icon="vpn" label="VPN" size="22"></icon-button><icon-button icon="menu" label="Menu" size="22"></icon-button></div>`);

define('book-mark', `<style>
  :host{display:block;flex:0 1 192px;min-width:0}
  :host([short]){flex-basis:117px}
  a{display:flex;align-items:center;gap:7px;color:#f4f4f6;text-decoration:none;font-size:14px;line-height:20px;white-space:nowrap}
</style><a href="#"><slot name="icon"></slot><slot></slot></a>`);

const MARKS = [['bcareers','JEE Main 2022 Sylla...'],['bworkly','Earn daily with freel...'],['bfreelancer','Freelancer'],['bq','1048 Work From Ho...'],['bcopy','I need Copy writing...'],['bwatch','Watch Chekka Chiv...'],['bchekka','Chekka Chivantha V...'],['bjio','Jio TV for PC Apk D...']];
define('bookmark-bar', `<style>
  :host{box-sizing:border-box;display:flex;align-items:center;height:42px;padding:0 16px 4px 6px;--h:38px}
  .bar{flex:none;width:3px;height:20px;margin:0 19px 0 8px;border-radius:2px;background:#232226}
  .end{display:flex;align-items:center;margin-left:auto}
  .end .bar{margin:0 17px 0 8px}
  .end book-mark{flex:none}
</style><icon-button icon="apps" label="Apps" size="21"></icon-button><div class="bar"></div>
${MARKS.map(([i, t]) => `<book-mark${t.length < 12 ? ' short' : ''}><ui-icon slot="icon" name="${i}" size="20"></ui-icon>${t}</book-mark>`).join('')}
<div class="end"><icon-button icon="more" label="More bookmarks" size="16"></icon-button><div class="bar"></div><book-mark><ui-icon slot="icon" name="folder" size="20"></ui-icon>All Bookmarks</book-mark></div>`);

define('browser-chrome', `<style>
  :host{display:block;flex:none;background:#1f1e22}
  .tools{background:#3b3a3e;border-radius:10px 10px 0 0;border-bottom:2px solid #2d2c31}
</style><tab-strip></tab-strip><div class="tools"><nav-bar></nav-bar><bookmark-bar></bookmark-bar></div>`);

/* ---------- task manager page ---------- */
define('ant-button', `<style>
  :host{display:block;flex:none}
  button{box-sizing:border-box;min-width:62px;height:32px;padding:0 15px;display:flex;align-items:center;justify-content:center;gap:8px;border:1px solid #d9d9d9;border-radius:6px;background:#fff;color:#1f1f1f;font:13px/22px "Open Sans",sans-serif;box-shadow:0 2px 0 rgba(0,0,0,.02);white-space:nowrap}
  :host([kind=primary]) button{background:#1890ff;border-color:#1890ff;color:#fff;box-shadow:0 2px 0 rgba(5,145,255,.1)}
  :host([kind=danger]) button{min-width:32px;padding:0;border-color:#ff4d4f;color:#ff4d4f;box-shadow:0 2px 0 rgba(255,38,5,.06)}
</style><button type="button"><slot></slot></button>`, (host, root) => {
  if (host.hasAttribute('label')) root.querySelector('button').setAttribute('aria-label', host.getAttribute('label'));
});

define('search-box', `<style>
  :host{display:flex;width:350px}
  input{box-sizing:border-box;flex:1;min-width:0;height:32px;margin:0;padding:0 11px;border:1px solid #d9d9d9;border-right:0;border-radius:6px 0 0 6px;font:13px/22px "Open Sans",sans-serif;color:#1f1f1f;outline:0}
  input::placeholder{color:#bfbfbf;opacity:1}
  button{width:46px;height:32px;padding:0;border:0;border-radius:0 6px 6px 0;background:#1890ff;color:#fff;display:flex;align-items:center;justify-content:center}
</style><input type="search" aria-label="Search tasks by name" placeholder="Search tasks by name"><button type="button" aria-label="Search"><ui-icon name="asearch" size="14"></ui-icon></button>`);

define('run-tag', `<style>
  :host{display:block;box-sizing:border-box;width:fit-content;min-width:22px;padding:0 6px;border:1px solid #d9d9d9;border-radius:4px;background:#fafafa;font-size:12px;line-height:20px;text-align:center;color:#1f1f1f}
  :host([active]){background:#e6f4ff;border-color:#91caff;color:#0958d9}
</style><slot></slot>`);

const TASKS = [['T101','Check Directory Status','John Smith',6],['TEMP-1760880798231','System Check','Rohit',0]];
define('task-table', `<style>
  :host{display:block}
  table{width:100%;table-layout:fixed;border-collapse:separate;border-spacing:0;font-size:13px;line-height:22px;color:#1f1f1f}
  th,td{padding:16px;border-bottom:1px solid #f0f0f0;text-align:left;vertical-align:middle;overflow-wrap:break-word}
  th{position:relative;background:#fafafa;font-weight:600}
  th:first-child{border-top-left-radius:8px}
  th:last-child{border-top-right-radius:8px}
  th:not(:last-child)::after{content:"";position:absolute;right:0;top:50%;height:22px;width:1px;margin-top:-11px;background:#f0f0f0}
  .sort{display:flex;justify-content:space-between;align-items:center}
  .acts{display:flex;gap:16px}
</style><table><colgroup><col style="width:130px"><col style="width:466px"><col style="width:274px"><col style="width:80px"><col></colgroup>
<thead><tr><th>ID</th><th><div class="sort">Name<ui-icon name="sort" size="16"></ui-icon></div></th><th>Owner</th><th>Runs</th><th>Action</th></tr></thead>
<tbody>${TASKS.map(([id, name, owner, runs]) => `<tr><td>${id}</td><td>${name}</td><td>${owner}</td><td><run-tag${runs ? ' active' : ''}>${runs}</run-tag></td><td><div class="acts"><ant-button kind="primary"><ui-icon name="aplay" size="14"></ui-icon>Run</ant-button><ant-button>View</ant-button><ant-button kind="danger" label="Delete"><ui-icon name="atrash" size="14"></ui-icon></ant-button></div></td></tr>`).join('')}</tbody></table>`);

define('page-nav', `<style>
  :host{display:flex;justify-content:flex-end;gap:8px;--w:32px;--h:32px}
  .page{box-sizing:border-box;width:32px;height:32px;padding:0;border:1px solid #1890ff;border-radius:6px;background:#fff;color:#1890ff;font:600 13px/30px "Open Sans",sans-serif}
  label{position:relative;display:block;margin-left:8px}
  select{appearance:none;box-sizing:border-box;width:101px;height:32px;margin:0;padding:0 11px;border:1px solid #d9d9d9;border-radius:6px;background:#fff;color:#1f1f1f;font:13px/22px "Open Sans",sans-serif}
  label ui-icon{position:absolute;right:11px;top:10px;pointer-events:none}
</style><icon-button icon="aleft" label="Previous page" size="12"></icon-button><button class="page" type="button" aria-current="page">1</button><icon-button icon="aright" label="Next page" size="12"></icon-button>
<label><select aria-label="Page size"><option>10 / page</option><option>20 / page</option></select><ui-icon name="adown" size="12"></ui-icon></label>`);

define('task-manager', `<style>
  :host{display:block;box-sizing:border-box;width:100%;max-width:1200px;margin:0 auto;padding:32px 0}
  h1{margin:21px 0 22px;font:700 32px/37px "Liberation Serif","Times New Roman",serif;color:#000}
  .tools{display:flex;justify-content:space-between;margin-bottom:16px}
  page-nav{margin-top:16px}
</style><h1>Rohit's Kubernetes Task Manager</h1>
<div class="tools"><search-box></search-box><ant-button kind="primary"><ui-icon name="aplus" size="14"></ui-icon>Create New Task</ant-button></div>
<task-table></task-table><page-nav></page-nav>`);

/* ---------- taskbar ---------- */
define('app-button', `<style>
  :host{position:relative;display:block;flex:none;width:55px;height:57px}
  button{all:unset;width:100%;height:100%;display:flex;align-items:center;justify-content:center}
  :host([running])::after{content:"";position:absolute;left:50%;bottom:3px;width:8px;height:4px;margin-left:-4px;border-radius:2px;background:#9d958f}
  :host([current])::after{width:20px;margin-left:-10px;background:#4cc2ff}
  :host([current])::before{content:"";position:absolute;z-index:-1;inset:4px 6px 2px 4px;border-radius:5px;background:#3f3128;border:1px solid #4c3f36;box-shadow:5px 0 0 -1px #44372e}
</style><button type="button"><slot></slot></button><slot name="badge"></slot>`, (host, root) => root.querySelector('button').setAttribute('aria-label', host.getAttribute('label')));

const APPS = [['taskview','Task view',''],['explorer','File Explorer','running'],['copilot','Copilot',''],['edge','Edge',''],['opera','Opera',''],['outlook','Outlook',''],['chrome','Chrome',''],['brave','Brave','running current'],['chrome2','Chrome profile','running'],['terminal','Terminal','running'],['vscode','Visual Studio Code','running'],['winrar','WinRAR','running'],['python','Python','running'],['powershell','PowerShell','running'],['docker','Docker','running'],['whatsapp','WhatsApp','running']];
define('task-bar', `<style>
  :host{position:relative;z-index:0;flex:none;display:flex;align-items:center;height:57px;padding-bottom:2px;border-top:1px solid #4b4139;background:linear-gradient(90deg,#271f1d 0,#2d1f1a 5%,#371f14 11%,#321f13 18%,#2e2015 30%,#2e2015 100%);color:#fff;font-size:14px;line-height:20px}
  .weather{flex:0 0 300px;display:flex;align-items:center;gap:9px;padding-left:25px}
  .weather .pic{position:relative}
  .weather p{margin:0}
  .weather .dim{color:#c9c1bc}
  .count{position:absolute;left:14px;top:-8px;width:20px;height:20px;border-radius:10px;background:#ff99a4;color:#000;font-size:13px;line-height:20px;text-align:center}
  .find{box-sizing:border-box;flex:0 0 275px;width:275px;min-width:0;height:40px;margin:0 3px 0 4px;padding:0 8px 0 14px;display:flex;align-items:center;border:1px solid #5f554d;border-radius:20px;background:#4a3e35}
  .find input{all:unset;flex:1 1 0;width:0;min-width:0;margin-left:12px;font-size:15px;line-height:24px;color:#d2ccc7}
  .find input::placeholder{color:#d2ccc7}
  .find ui-icon + ui-icon{margin-left:3px}
  .face{position:absolute;left:28px;top:8px;width:20px;height:23px;border-radius:10px;background:radial-gradient(circle at 45% 40%,#54465a 0,#15173a 30%,#05061a 70%)}
  .dot{position:absolute;left:29px;top:8px;width:20px;height:22px;border-radius:10px;background:#4cc2ff;color:#111;font-size:14px;line-height:22px;text-align:center}
  .tray{margin-left:auto;display:flex;align-items:center;padding-right:24px}
  .lang{width:58px;text-align:center}
  .status{display:flex;gap:10px;margin:0 24px 0 8px}
  .clock{text-align:right}
</style>
<div class="weather"><div class="pic"><ui-icon name="weather" size="30"></ui-icon><span class="count">9+</span></div><div><p>23°C</p><p class="dim">Mostly cloudy</p></div></div>
<app-button label="Start"><ui-icon name="windows" size="30"></ui-icon></app-button>
<div class="find"><ui-icon name="wsearch" size="19"></ui-icon><input type="search" aria-label="Search" placeholder="Search"><ui-icon name="diya" size="24"></ui-icon><ui-icon name="rangoli" size="28"></ui-icon></div>
${APPS.map(([i, l, a]) => `<app-button label="${l}" ${a}><ui-icon name="${i}" size="30"></ui-icon>${i === 'chrome2' ? '<span class="face" slot="badge"></span>' : i === 'whatsapp' ? '<span class="dot" slot="badge">2</span>' : ''}</app-button>`).join('')}
<div class="tray"><icon-button icon="chevup" label="Hidden icons" size="16"></icon-button><div class="lang">ENG<br>IN</div><div class="status"><ui-icon name="wifi" size="20"></ui-icon><ui-icon name="mute" size="20"></ui-icon><ui-icon name="battery" size="22"></ui-icon></div><div class="clock">21:25<br>20-10-2025</div></div>`);

define('desk-top', `<style>
  :host{display:flex;flex-direction:column;height:100vh;overflow:hidden}
  main{flex:1;min-height:0;background:#fff;overflow:auto}
</style><browser-chrome></browser-chrome><main><task-manager></task-manager></main><task-bar></task-bar>`);
</script>
</body>
</html>
